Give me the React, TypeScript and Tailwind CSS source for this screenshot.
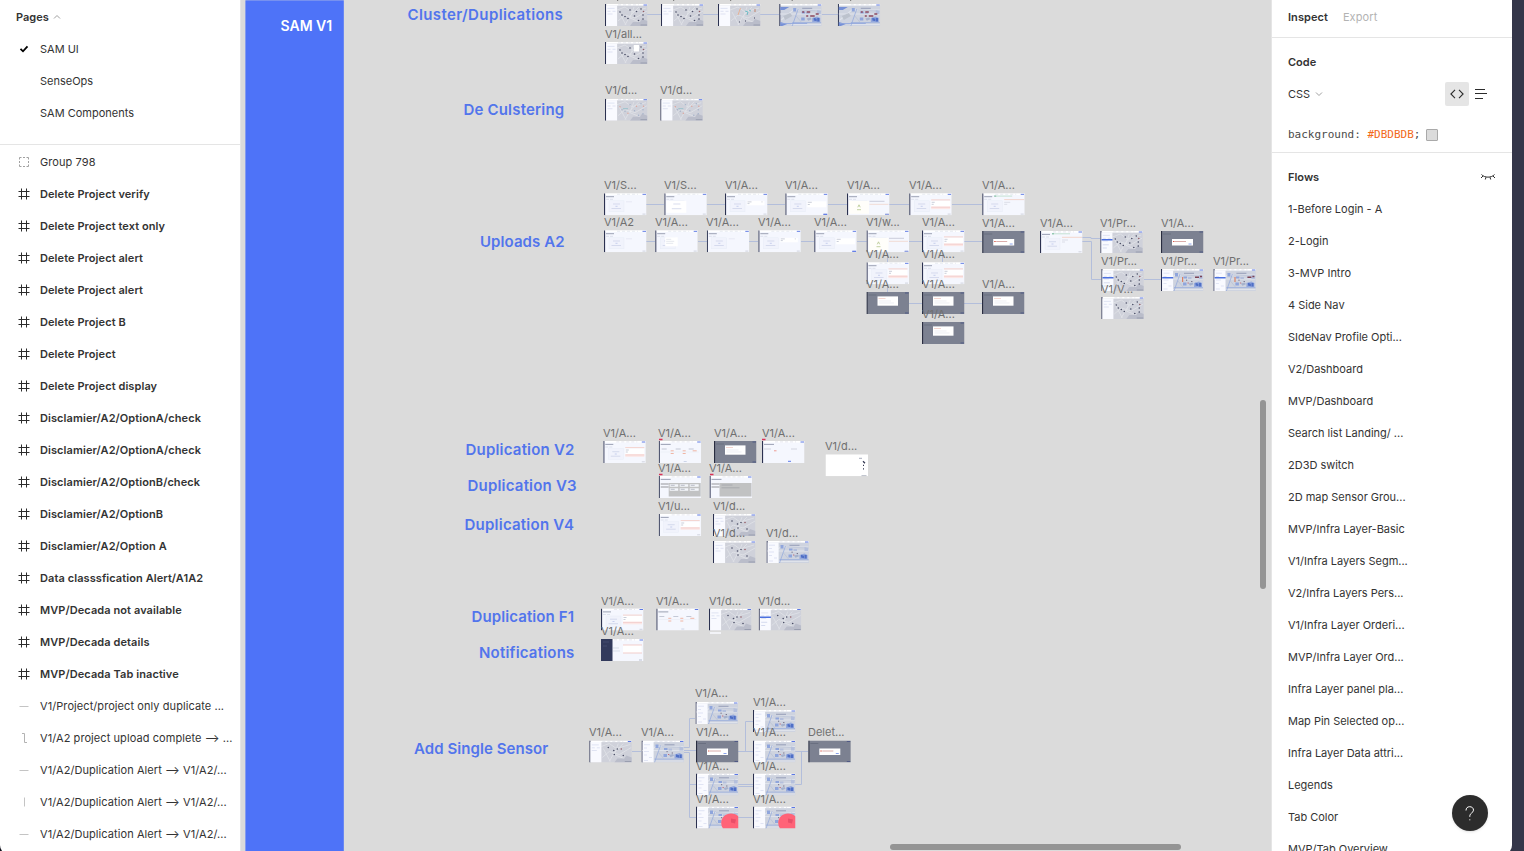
import type { ReactNode } from "react";

const CANVAS_X = 241;

type Kind =
  | "form" | "upload" | "result" | "alert" | "drag" | "success" | "dropdown"
  | "dark" | "darkRed" | "map" | "mapFew" | "mapSoft" | "mapNav" | "mapNavFew" | "mapPopup" | "mapColor" | "blue" | "blueFull" | "blueNav"
  | "blueRed" | "table" | "simple" | "grayTable" | "grayBlock" | "white" | "sideDark" | "flagForm";

type Frame = { x: number; y: number; kind: Kind; label?: string; base?: number };

const frames: Frame[] = [
  { x: 605, y: 4, kind: "map" },
  { x: 661, y: 4, kind: "map" },
  { x: 718, y: 4, kind: "mapColor" },
  { x: 779.2, y: 4, kind: "blueFull" },
  { x: 837.8, y: 4, kind: "blueFull" },
  { x: 605, y: 42, kind: "mapPopup", label: "V1/all...", base: 38 },
  { x: 605, y: 98.7, kind: "mapSoft", label: "V1/d...", base: 94 },
  { x: 660.3, y: 98.7, kind: "mapSoft", label: "V1/d...", base: 94 },

  { x: 604, y: 193.3, kind: "form", label: "V1/S...", base: 189 },
  { x: 664.3, y: 193.3, kind: "drag", label: "V1/S...", base: 189 },
  { x: 725, y: 193.3, kind: "upload", label: "V1/A...", base: 189 },
  { x: 785.3, y: 193.3, kind: "result", label: "V1/A...", base: 189 },
  { x: 847, y: 193.3, kind: "success", label: "V1/A...", base: 189 },
  { x: 909.2, y: 193.3, kind: "alert", label: "V1/A...", base: 189 },
  { x: 982.2, y: 193.3, kind: "flagForm", label: "V1/A...", base: 189 },

  { x: 604, y: 230.3, kind: "form", label: "V1/A2", base: 226 },
  { x: 655.2, y: 230.3, kind: "dropdown", label: "V1/A...", base: 226 },
  { x: 706.8, y: 230.3, kind: "form", label: "V1/A...", base: 226 },
  { x: 758.3, y: 230.3, kind: "upload", label: "V1/A...", base: 226 },
  { x: 814.2, y: 230.3, kind: "result", label: "V1/A...", base: 226 },
  { x: 866.5, y: 230.3, kind: "success", label: "V1/w...", base: 226 },
  { x: 922, y: 230.3, kind: "alert", label: "V1/A...", base: 226 },
  { x: 982.2, y: 231, kind: "darkRed", label: "V1/A...", base: 227 },
  { x: 1040, y: 231, kind: "flagForm", label: "V1/A...", base: 227 },
  { x: 1100.3, y: 231, kind: "mapNav", label: "V1/Pr...", base: 227 },
  { x: 1161, y: 231, kind: "darkRed", label: "V1/A...", base: 227 },
  { x: 866.5, y: 262.3, kind: "alert", label: "V1/A...", base: 258 },
  { x: 922, y: 262.3, kind: "alert", label: "V1/A...", base: 258 },
  { x: 866.5, y: 292, kind: "dark", label: "V1/A...", base: 288 },
  { x: 922, y: 292, kind: "dark", label: "V1/A...", base: 288 },
  { x: 982, y: 292, kind: "dark", label: "V1/A...", base: 288 },
  { x: 922, y: 322, kind: "dark", label: "V1/A...", base: 318 },
  { x: 1101.3, y: 269, kind: "mapNav", label: "V1/Pr...", base: 265 },
  { x: 1161, y: 269, kind: "blueNav", label: "V1/Pr...", base: 265 },
  { x: 1213.4, y: 269, kind: "blueNav", label: "V1/Pr...", base: 265 },
  { x: 1101.3, y: 297, kind: "map", label: "V1/V...", base: 293 },

  { x: 603.3, y: 441, kind: "alert", label: "V1/A...", base: 437 },
  { x: 658.7, y: 441, kind: "table", label: "V1/A...", base: 437 },
  { x: 714, y: 441, kind: "dark", label: "V1/A...", base: 437 },
  { x: 762, y: 441, kind: "simple", label: "V1/A...", base: 437 },
  { x: 825.5, y: 454.3, kind: "white", label: "V1/d...", base: 450 },
  { x: 658.7, y: 476, kind: "grayTable", label: "V1/A...", base: 472 },
  { x: 709.5, y: 476, kind: "grayBlock", label: "V1/A...", base: 472 },
  { x: 658.7, y: 514, kind: "alert", label: "V1/u...", base: 510 },
  { x: 713, y: 514, kind: "mapFew", label: "V1/d...", base: 510 },
  { x: 713, y: 541, kind: "mapFew", label: "V1/d...", base: 537 },
  { x: 766.5, y: 541, kind: "blue", label: "V1/d...", base: 537 },

  { x: 601, y: 608.5, kind: "alert", label: "V1/A...", base: 605 },
  { x: 656.3, y: 608.5, kind: "table", label: "V1/A...", base: 605 },
  { x: 709, y: 608.5, kind: "mapFew", label: "V1/d...", base: 605 },
  { x: 758.7, y: 608.5, kind: "mapNavFew", label: "V1/d...", base: 605 },
  { x: 601, y: 639, kind: "sideDark", label: "V1/A...", base: 635 },

  { x: 695.5, y: 702, kind: "blue", label: "V1/A...", base: 697 },
  { x: 753, y: 710, kind: "blue", label: "V1/A...", base: 706 },
  { x: 589.3, y: 740.5, kind: "mapFew", label: "V1/A...", base: 736 },
  { x: 641.5, y: 740.5, kind: "blue", label: "V1/A...", base: 736 },
  { x: 696, y: 740.5, kind: "darkRed", label: "V1/A...", base: 736 },
  { x: 753, y: 740.5, kind: "blue", label: "V1/A...", base: 736 },
  { x: 808.3, y: 740.5, kind: "darkRed", label: "Delet...", base: 736 },
  { x: 696, y: 773.5, kind: "blue", label: "V1/A...", base: 770 },
  { x: 753, y: 773.5, kind: "blue", label: "V1/A...", base: 770 },
  { x: 696, y: 806.5, kind: "blueRed", label: "V1/A...", base: 803 },
  { x: 753, y: 806.5, kind: "blueRed", label: "V1/A...", base: 803 },
];

const sections = [
  { text: "Cluster/Duplications", x: 407.5, y: 15, tracking: 0.38 },
  { text: "De Culstering", x: 463.5, y: 110, tracking: 0.18 },
  { text: "Uploads A2", x: 480, y: 242, tracking: 0.08 },
  { text: "Duplication V2", x: 465.5, y: 450, tracking: 0.2 },
  { text: "Duplication V3", x: 467.5, y: 486, tracking: 0.2 },
  { text: "Duplication V4", x: 464.5, y: 525, tracking: 0.23 },
  { text: "Duplication F1", x: 471.5, y: 617, tracking: 0.1 },
  { text: "Notifications", x: 479, y: 653, tracking: 0.2 },
  { text: "Add Single Sensor", x: 414, y: 749, tracking: 0.07 },
];

const connectors = [
  "M647 14.5H661M703 14.5H718M760 14.5H779M822 14.5H838",
  "M646 204.5H664M707 204.5H725M767 204.5H785M828 204.5H847M889 204.5H909M952 204.5H982",
  "M646 241.5H655M698 241.5H707M749 241.5H758M801 241.5H814M857 241.5H867M909 241.5H922M964 241.5H982",
  "M887.5 253V262M942.5 253V262M887.5 285V292M909 303.5H922M964 303.5H982",
  "M1082 237.5H1091V238.5H1100M1082 241.5H1091.5V279.5H1101M1144 279.5H1161",
  "M632 751.5H641M684 747.5H689.5V718.5H695M684 750.5H696M684 752.5H689.5V817.5H696M689.5 784.5H696M738 751.5H753M745.5 751.5V721.5H753M738 784.5H753M738 786.5H753M738 817.5H753M795 751.5H808M795 784.5H801.5V751.5",
];

const Chrome = ({ fill = "#f5f7fe" }: { fill?: string }) => (
  <>
    <rect width="42.5" height="22" fill={fill} />
    <rect x="1" width="41.5" height="1.6" fill="#fff" />
    <path d="M13 .9h21" stroke="#d5d8e4" strokeWidth=".6" strokeDasharray="3 2" />
    <path d="M38.5 1h3.5" stroke="#5c78e4" strokeWidth="1" />
    <rect width="1.1" height="22" fill="#2b3150" />
  </>
);

const FormBase = () => (
  <>
    <Chrome />
    <path d="M2 3.4h8" stroke="#767c94" strokeWidth=".7" />
    <path d="M2 6h3m1 0h3" stroke="#c5cadb" strokeWidth=".5" />
    <rect x="5" y="7.5" width="15" height="11" fill="#f1f3fc" stroke="#e7eaf6" strokeWidth=".4" />
    <path d="M9 10.7h7M7.5 15.2h9.5" stroke="#c8cfe6" strokeWidth=".7" />
    <path d="M11.5 13h2" stroke="#aab5e4" strokeWidth=".6" />
    <path d="M38.5 20.8h3" stroke="#c6cad6" strokeWidth=".8" />
  </>
);

const manyPins = [[15, 8], [17, 11], [20, 12.5], [23, 14.5], [25, 6], [29.5, 12], [31.5, 7.5], [33.5, 16.5], [36, 5], [38.5, 7.5], [38, 11], [38, 15]];
const fewPins = [[19, 7], [24.5, 10], [28, 8.5], [32, 8.5], [25, 14], [34, 15]];

const Pins = ({ soft = false, few = false }: { soft?: boolean; few?: boolean }) => (
  <g>
    {(few ? fewPins : manyPins).map(([x, y], i) => (
      <circle key={i} cx={x} cy={y} r={soft ? 0.7 : 0.8} fill={soft ? (i % 3 === 0 ? "#dda298" : "#a3b1c9") : i === 9 || (few && i === 3) ? "#955e66" : "#4a4e66"} />
    ))}
  </g>
);

const MapBase = ({ nav = false }: { nav?: boolean }) => (
  <>
    <Chrome fill="#cfd1da" />
    <path d="M12 6l8-3 7 5 14-4M13 17l7-6 10 3 12-7M20 21l5-9 9-9M29 3l-4 11 12 5M14 8l7 13" stroke="#dfe1e7" strokeWidth=".9" fill="none" />
    <path d="M25 22l3-4h7l2-3 5.500 2v5z" fill="#babdca" />
    <rect x="1.1" y="1.4" width="11" height="20.6" fill="#f9faff" />
    <path d="M2.5 4.400h7M2.5 7.300h3m2 0h3M2.5 10h5" stroke="#ccd3ea" strokeWidth=".6" />
    {nav && <path d="M1.2 8.700h11" stroke="#4b70df" strokeWidth="1.600" />}
    {nav && <path d="M2.5 13.800h6M2.5 17h4" stroke="#c6cde8" strokeWidth=".7" />}
    <path d="M35.5 21h6.500" stroke="#8b90a4" strokeWidth=".7" />
  </>
);

const BlueMap = ({ full = false, nav = false }: { full?: boolean; nav?: boolean }) => (
  <>
    <Chrome fill="#ced3df" />
    <path d="M1 10h41M12 20.500h30M2 16l12-10h28" stroke="#dfe3eb" strokeWidth="1.200" fill="none" />
    <path d="M19 5l-6 17M13 18.600h29" stroke="#8fa6dc" strokeWidth=".7" fill="none" />
    <path d="M20 6l22 1M17 12l5 6" stroke="#b3bdd4" strokeWidth=".6" fill="none" />
    <path d="M14 4h3v3.500h-3zM22.500 7.500h3.500v2h-3.500zM22 13.500h3.500v3H22z" fill="#8fa5dc" />
    <path d="M27 8h3.500v2H27zM38 6l3.500 1v3H38z" fill="#b4bfdc" />
    <path d="M33 14l5-1.500 3 1.500v4h-8z" fill="#94a8dc" />
    <path d="M34.500 13.800l3 1v2.500l-3-.8zM38 14h2.200v3.500H38z" fill="#4f6fc6" />
    <path d="M27.500 14.500l4-1 1 1.800-3.500 1.500z" fill="#a5b1cc" />
    <path d="M23 4.300h10" stroke="#808aa8" strokeWidth=".7" />
    {full ? (
      <>
        <path d="M1 18l7 2-5 2H1zM1 3h9l-5 3H1z" fill="#7690d6" />
        <path d="M4 12l7-3 2 3-7 4z" fill="#bcc2cd" />
        <path d="M23 8h2m2.500 0h3.500M27 12h2m2 0h4.500m1-2h3" stroke="#8d4a5f" strokeWidth="1.400" />
        <path d="M2 19.500h26" stroke="#8ea5dd" strokeWidth=".8" />
      </>
    ) : (
      <>
        <path d="M25 11.200h1.200m4 1.300h1.200" stroke="#6f6a80" strokeWidth="1" />
        <path d="M26.500 14h1.300" stroke="#c26f7b" strokeWidth="1" />
        <rect x="1.100" y="1.400" width="11" height="20.600" fill="#f9faff" />
        <path d="M2.500 4.200h6M2.500 7.500h3M2.500 11h5M2.500 14.500h3M7.500 17h3M2.500 20h4" stroke="#ced5ec" strokeWidth=".6" />
      </>
    )}
    {nav && (
      <>
        <path d="M1.200 8.700h11" stroke="#4b70df" strokeWidth="1.600" />
        <path d="M21.600 8v5" stroke="#db8265" strokeWidth="1.200" />
        <path d="M34 8.200h4m1-.8h2" stroke="#7c4254" strokeWidth="1.500" />
      </>
    )}
  </>
);

function art(kind: Kind): ReactNode {
  switch (kind) {
    case "form":
      return <><FormBase /><path d="M22 8.500h6" stroke="#e1e4f0" strokeWidth=".7" /></>;
    case "drag":
      return <><FormBase /><rect x="2" y="7.500" width="20" height="12" fill="#fff" /><path d="M9 10.700h7M7.500 15.400h9.500" stroke="#c8cfe6" strokeWidth=".7" /></>;
    case "upload":
      return <><FormBase /><rect x="22" y="7.500" width="17.500" height="4.500" fill="#fff" /><path d="M22.500 8.600h4m-4 1.700h2m12-1.700h1" stroke="#a6acbf" strokeWidth=".6" /></>;
    case "result":
      return <><FormBase /><rect x="22" y="8" width="19" height="6" fill="#fff" /><path d="M22.500 9h4m-4 2.200h2" stroke="#a6acbf" strokeWidth=".6" /><path d="M38 21h4" stroke="#647fe8" strokeWidth="1.200" /></>;
    case "dropdown":
      return <><FormBase /><rect x="10" y="7" width="12.500" height="9" fill="#fff" /><path d="M11 9h5m-5 2h8m-8 2h7" stroke="#d3d6e1" strokeWidth=".6" /></>;
    case "success":
      return <><FormBase /><rect x="2" y="7.500" width="20" height="13" fill="#fffefa" /><path d="M10.800 14l1.200-2.500 1.200 2.500M10 16.400h4" stroke="#b3c58c" strokeWidth=".8" fill="none" /><path d="M22.500 8h15" stroke="#b7bbcc" strokeWidth=".7" /><path d="M22.500 11h19" stroke="#efc7bb" strokeWidth=".6" /><path d="M38 21h4" stroke="#7e91e0" strokeWidth="1" /></>;
    case "alert":
      return <><FormBase /><rect x="22" y="7.500" width="19" height="7" fill="#fff" /><path d="M22 6.600h19" stroke="#f3c3b8" strokeWidth=".7" /><path d="M22.500 9h3m-3 2h2" stroke="#a6acbf" strokeWidth=".6" /><rect x="22" y="13" width="19" height="2.800" fill="#fce7e5" /><path d="M22 14h19" stroke="#edbcbc" strokeWidth=".5" /></>;
    case "flagForm":
      return <><FormBase /><path d="M12 2.800h18" stroke="#c5e2d2" strokeWidth="1" /><path d="M12 2.800h2" stroke="#63b08e" strokeWidth=".8" /><path d="M22 6.300h20" stroke="#f0c7b6" strokeWidth=".7" /><path d="M22 9h6m-6 2h3" stroke="#c9cdd9" strokeWidth=".6" /></>;
    case "dark":
    case "darkRed":
      return (
        <>
          <rect width="42.500" height="22" fill="#7c8191" />
          <path d="M2 3h8" stroke="#626778" strokeWidth=".7" />
          <rect width="1.100" height="22" fill="#292d40" />
          <path d="M38.500 1h3.500M38.500 21h3.500" stroke="#4b5583" strokeWidth=".9" />
          {kind === "dark" ? (
            <><rect x="11" y="4.400" width="20.500" height="9.300" fill="#fff" /><path d="M12.500 9h12m-12 2h15" stroke="#e0e3ec" strokeWidth=".6" /><path d="M12 6.500h7" stroke="#eebbb0" strokeWidth=".6" /></>
          ) : (
            <><rect x="11" y="8" width="21" height="6.500" fill="#fff" /><path d="M12 10.500h1.500" stroke="#db5a4c" strokeWidth="1.200" /><path d="M14 10.500h11" stroke="#d09896" strokeWidth=".8" /><path d="M27.500 13h3" stroke="#7d97ea" strokeWidth=".9" /></>
          )}
        </>
      );
    case "map": return <><MapBase /><Pins /></>;
    case "mapFew": return <><MapBase /><Pins few /></>;
    case "mapSoft": return <><MapBase /><Pins soft /><path d="M18 10h5" stroke="#93c0cb" strokeWidth=".9" /></>;
    case "mapNav": return <><MapBase nav /><Pins /></>;
    case "mapNavFew": return <><MapBase nav /><Pins few /></>;
    case "mapPopup": return <><MapBase /><Pins /><rect x="29" y="3" width="5" height="6.500" fill="#fff" /></>;
    case "mapColor": return <><MapBase /><path d="M20 11l2.500-7" stroke="#ecaa83" strokeWidth=".8" /><path d="M27 7l3 1-1 3m2-5l2 1" stroke="#70bcc6" strokeWidth="1" fill="none" /><path d="M37 5v3" stroke="#be846d" strokeWidth="1" /><path d="M21 18h1m5-1h1m8-3h1" stroke="#42465e" strokeWidth="1.200" /></>;
    case "blue": return <BlueMap />;
    case "blueFull": return <BlueMap full />;
    case "blueNav": return <BlueMap nav />;
    case "blueRed": return <><BlueMap /><path d="M27 22a9 9 0 0 1-1.800-5.500C25.200 11 29.500 7 35 7c3 0 5.700 1 7.500 3v12z" fill="#ff6378" /><path d="M35 12l5 1-1 4-4-1z" fill="#e94f69" /></>;
    case "table": return <><Chrome /><path d="M2 3.400h10" stroke="#767c94" strokeWidth=".7" /><path d="M3 8h5m9 0h5m8 0h5" stroke="#a3a9bb" strokeWidth=".6" /><path d="M2 11h38" stroke="#e6e9f2" strokeWidth=".5" /><path d="M12 9.800h3m9 0h3m7 0h4M12 12.500h3m9 0h3" stroke="#efa58e" strokeWidth=".8" /><path d="M25 20.500h3" stroke="#c3cbe2" strokeWidth=".8" /></>;
    case "simple": return <><Chrome /><path d="M2 3.400h10" stroke="#767c94" strokeWidth=".7" /><path d="M2 8h7m20 0h6" stroke="#bcc0ce" strokeWidth=".6" /><path d="M12 9.800h2.500" stroke="#ee9187" strokeWidth=".9" /><path d="M26 20.300h3" stroke="#5d7bed" strokeWidth="1" /></>;
    case "grayTable": return <><Chrome /><path d="M2 3.400h10" stroke="#767c94" strokeWidth=".7" /><rect x="10" y="7" width="32" height="13.500" fill="#c1c2c3" /><path d="M2 8h8m-8 3h8" stroke="#b5b7bc" strokeWidth="1.600" /><path d="M11 9.500h8.500m1.500 0h8.500m1.500 0h9M11 13.500h8.500m1.500 0h8.500m1.500 0h9" stroke="#f4f6fb" strokeWidth="2.600" /><path d="M12 9.300h4m6 0h4m6 0h4M12 13.300h4m6 0h4m6 0h4" stroke="#8f94a3" strokeWidth=".6" /></>;
    case "grayBlock": return <><Chrome /><path d="M2 3.400h10" stroke="#767c94" strokeWidth=".7" /><rect x="10" y="7" width="32" height="13.500" fill="#c1c2c3" /><path d="M2 8h8m-8 3h8" stroke="#b5b7bc" strokeWidth="1.600" /><path d="M12 9h11m-11 2.800h18" stroke="#a1a3a8" strokeWidth=".8" /></>;
    case "white": return <><rect width="42.500" height="22" fill="#fff" /><path d="M33.500 4h3M36 21.500h5" stroke="#9298aa" strokeWidth=".8" /><path d="M37.500 7l2 2m-2 2h1m0 3.500h-1" stroke="#343852" strokeWidth="1.300" fill="none" /></>;
    case "sideDark": return <><Chrome /><rect width="11.500" height="22" fill="#323a5c" /><path d="M2 3h6M2 7h4" stroke="#4c5476" strokeWidth=".7" /><rect x="22" y="6" width="18.500" height="8" fill="#fff" /><path d="M22 6h19M22 14h19" stroke="#efb9b6" strokeWidth=".7" /><path d="M12 9h6m-6 3h7" stroke="#cdd2e1" strokeWidth=".7" /><path d="M38 21h3" stroke="#bbc0cf" /></>;
  }
}

type RowIcon = "group" | "frame" | "h" | "v" | "step";
const layers: { icon: RowIcon; text: string }[] = [
  { icon: "group", text: "Group 798" },
  { icon: "frame", text: "Delete Project verify" },
  { icon: "frame", text: "Delete Project text only" },
  { icon: "frame", text: "Delete Project alert" },
  { icon: "frame", text: "Delete Project alert" },
  { icon: "frame", text: "Delete Project B" },
  { icon: "frame", text: "Delete Project" },
  { icon: "frame", text: "Delete Project display" },
  { icon: "frame", text: "Disclamier/A2/OptionA/check" },
  { icon: "frame", text: "Disclamier/A2/OptionA/check" },
  { icon: "frame", text: "Disclamier/A2/OptionB/check" },
  { icon: "frame", text: "Disclamier/A2/OptionB" },
  { icon: "frame", text: "Disclamier/A2/Option A" },
  { icon: "frame", text: "Data classsfication Alert/A1A2" },
  { icon: "frame", text: "MVP/Decada not available" },
  { icon: "frame", text: "MVP/Decada details" },
  { icon: "frame", text: "MVP/Decada Tab inactive" },
  { icon: "h", text: "V1/Project/project only duplicate ..." },
  { icon: "step", text: "V1/A2 project upload complete ⟶ ..." },
  { icon: "h", text: "V1/A2/Duplication Alert ⟶ V1/A2/..." },
  { icon: "v", text: "V1/A2/Duplication Alert ⟶ V1/A2/..." },
  { icon: "h", text: "V1/A2/Duplication Alert ⟶ V1/A2/..." },
];

const iconPaths: Record<RowIcon, { d: string; stroke: string }> = {
  group: { d: "M1.5 3.5v-2h2M5 1.5h2M8.5 1.5h2v2M10.5 5v2M10.5 8.500v2h-2M7 10.500H5M3.500 10.500h-2v-2M1.500 7V5", stroke: "#a0a0a0" },
  frame: { d: "M3.500 .5v11M8.500 .5v11M.5 3.500h11M.5 8.500h11", stroke: "#2c2c2c" },
  h: { d: "M1.500 6.500h9", stroke: "#c4c4c4" },
  v: { d: "M6.500 1.500v9", stroke: "#c4c4c4" },
  step: { d: "M4 1.500h2.500v9H9", stroke: "#b3b3b3" },
};

const flows = [
  "1-Before Login - A", "2-Login", "3-MVP Intro", "4 Side Nav", "SIdeNav Profile Opti...", "V2/Dashboard",
  "MVP/Dashboard", "Search list Landing/ ...", "2D3D switch", "2D map Sensor Grou...", "MVP/Infra Layer-Basic",
  "V1/Infra Layers Segm...", "V2/Infra Layers Pers...", "V1/Infra Layer Orderi...", "MVP/Infra Layer Ord...",
  "Infra Layer panel pla...", "Map Pin Selected op...", "Infra Layer Data attri...", "Legends", "Tab Color", "MVP/Tab Overview",
];

function LeftPanel() {
  return (
    <aside className="w-[241px] shrink-0 border-r border-[#e5e5e5] bg-white">
      <div className="flex h-[145px] flex-col border-b border-[#e5e5e5]">
        <div className="flex h-[33px] items-center gap-1 pl-4 font-semibold">
          Pages
          <svg width="8" height="8" viewBox="0 0 8 8" fill="none" stroke="#a0a0a0"><path d="M1 5.500l3-3 3 3" /></svg>
        </div>
        <div className="flex h-8 items-center pl-[19px]">
          <svg className="mr-[11px]" width="10" height="8" viewBox="0 0 10 8" fill="none" stroke="#000" strokeWidth="1.8"><path d="M1.500 3.800l2.500 2.500 4.500-5" /></svg>
          SAM UI
        </div>
        <div className="flex h-8 items-center pl-10">SenseOps</div>
        <div className="flex h-8 items-center pl-10">SAM Components</div>
      </div>
      <ul className="pt-px">
        {layers.map((l, i) => {
          const icon = iconPaths[l.icon];
          return (
            <li key={i} className={l.icon === "frame" ? "flex h-8 items-center pl-[18px] font-semibold tracking-[0.08px]" : "flex h-8 items-center pl-[18px] tracking-[0.075px]"}>
              <svg className="mr-[10px] shrink-0" width="12" height="12" viewBox="0 0 12 12" fill="none" stroke={icon.stroke}><path d={icon.d} /></svg>
              <span className="whitespace-nowrap">{l.text}</span>
            </li>
          );
        })}
      </ul>
    </aside>
  );
}

function Canvas() {
  return (
    <main className="relative min-w-0 flex-1 overflow-hidden bg-[#dbdbdb]">
      <svg className="absolute inset-0" width="1030" height="851" viewBox="241 0 1030 851">
        <rect x="245.400" y="0.300" width="98.400" height="851" fill="#4e73f8" />
        <path d="M617.500 1l.7-2M673.500 1l.7-2M730.500 1l.7-2M792 1l.7-2M850.500 1l.7-2" stroke="#707070" />
        <g fill="none" stroke="#b3bedb" strokeWidth="1">
          {connectors.map((d, i) => <path key={i} d={d} />)}
        </g>
        {frames.map((f, i) => (
          <svg key={i} x={f.x} y={f.y} width="42.5" height="22" viewBox="0 0 42.5 22">{art(f.kind)}</svg>
        ))}
        <path d="M659 439.500h3.500M762 439.500h3.500M659 474.500h3.500M710 474.500h3.500" stroke="#dc3159" strokeWidth="1.500" />
        <path d="M710 633h11" stroke="#f2f3f7" strokeWidth="2" />
      </svg>
      {frames.filter((f) => f.label).map((f, i) => (
        <span key={i} className="absolute text-[11px] leading-4 tracking-normal whitespace-nowrap text-[#707070]" style={{ left: Math.floor(f.x) - CANVAS_X, top: (f.base ?? 0) - 12 }}>
          {f.label}
        </span>
      ))}
      <span className="absolute top-[16px] left-[39.5px] text-[14px] leading-5 font-semibold tracking-normal whitespace-nowrap text-white">SAM V1</span>
      {sections.map((s) => (
        <span key={s.text} className="absolute text-[15px] leading-5 font-semibold whitespace-nowrap text-[#5275ec]" style={{ left: s.x - CANVAS_X, top: s.y - 10, letterSpacing: s.tracking }}>
          {s.text}
        </span>
      ))}
      <div className="absolute top-[400px] right-[5px] h-[189px] w-[6px] rounded-full bg-[#949494]" />
      <div className="absolute top-[844px] left-[649px] h-[6px] w-[291px] rounded-full bg-[#949494]" />
    </main>
  );
}

function RightPanel() {
  return (
    <aside className="relative w-[241px] shrink-0 border-l border-[#e5e5e5] bg-white">
      <div className="flex h-[38px] items-center gap-[15px] border-b border-[#e5e5e5] pb-[3px] pl-4">
        <span className="font-semibold tracking-[0.055px]">Inspect</span>
        <span className="tracking-[0.1px] text-[#b3b3b3]">Export</span>
      </div>
      <div className="flex h-[115px] flex-col border-b border-[#e5e5e5] pt-2">
        <div className="flex h-8 shrink-0 items-center pl-4 font-semibold">Code</div>
        <div className="flex h-8 shrink-0 items-center pr-[25px] pl-4">
          <span>CSS</span>
          <svg className="ml-[5px]" width="8" height="8" viewBox="0 0 8 8" fill="none" stroke="#a0a0a0"><path d="M1 2.500l3 3 3-3" /></svg>
          <span className="ml-auto flex size-6 items-center justify-center rounded-[2px] bg-[#e5e5e5]">
            <svg width="14" height="10" viewBox="0 0 14 10" fill="none" stroke="#2c2c2c" strokeWidth="1.100"><path d="M5 .8L.9 5 5 9.200M9 .8L13.100 5 9 9.200" /></svg>
          </span>
          <svg className="ml-[6px]" width="12" height="10" viewBox="0 0 12 10" stroke="#2c2c2c"><path d="M0 .5h10M0 4.500h12M0 9.500h8" /></svg>
        </div>
        <div className="flex h-[42px] shrink-0 items-center pt-[8px] pl-4 font-['DejaVu_Sans_Mono',monospace] text-[11px] tracking-normal">
          <span className="whitespace-pre text-[#4a4a4a]">background: <span className="text-[#f26a1b]">#DBDBDB</span>;</span>
          <span className="ml-[6px] size-3 rounded-[1px] border border-[#a9a9a9] bg-[#dbdbdb]" />
        </div>
      </div>
      <div className="flex h-12 items-center justify-between pr-4 pl-4 font-semibold">
        Flows
        <svg width="16" height="8" viewBox="0 0 16 8" fill="none" stroke="#2c2c2c"><path d="M1.500 1.500c3 3.500 10 3.500 13 0M3 3L1 5M6 4.200L5.300 6.500M10 4.200l.7 2.300M13 3l2 2" /></svg>
      </div>
      <ul className="-mt-2">
        {flows.map((t) => <li key={t} className="flex h-8 items-center pl-4 tracking-[-0.01px] whitespace-nowrap">{t}</li>)}
      </ul>
      <button aria-label="Help" className="absolute top-[795px] left-[180px] flex size-9 items-center justify-center rounded-full bg-[#2c2c2c] shadow-sm">
        <svg width="10" height="15" viewBox="0 0 10 15" fill="none" stroke="#fff"><path d="M1 4.500C1 2 2.500.7 4.700.7S8.500 2 8.500 4.200c0 2.500-3.700 3-3.700 5.600v1" /><path d="M4.300 13.800h1" /></svg>
      </button>
    </aside>
  );
}

export default function App() {
  return (
    <div className="h-[851px] w-[1524px] overflow-hidden bg-[linear-gradient(to_right,#10101b_1400px,#343649_1513px)] font-[Inter,sans-serif] text-[11px] leading-4 text-[#333]">
      <div className="flex h-[855px] w-[1512px] overflow-hidden rounded-b-[10px]">
        <LeftPanel />
        <Canvas />
        <RightPanel />
      </div>
    </div>
  );
}
